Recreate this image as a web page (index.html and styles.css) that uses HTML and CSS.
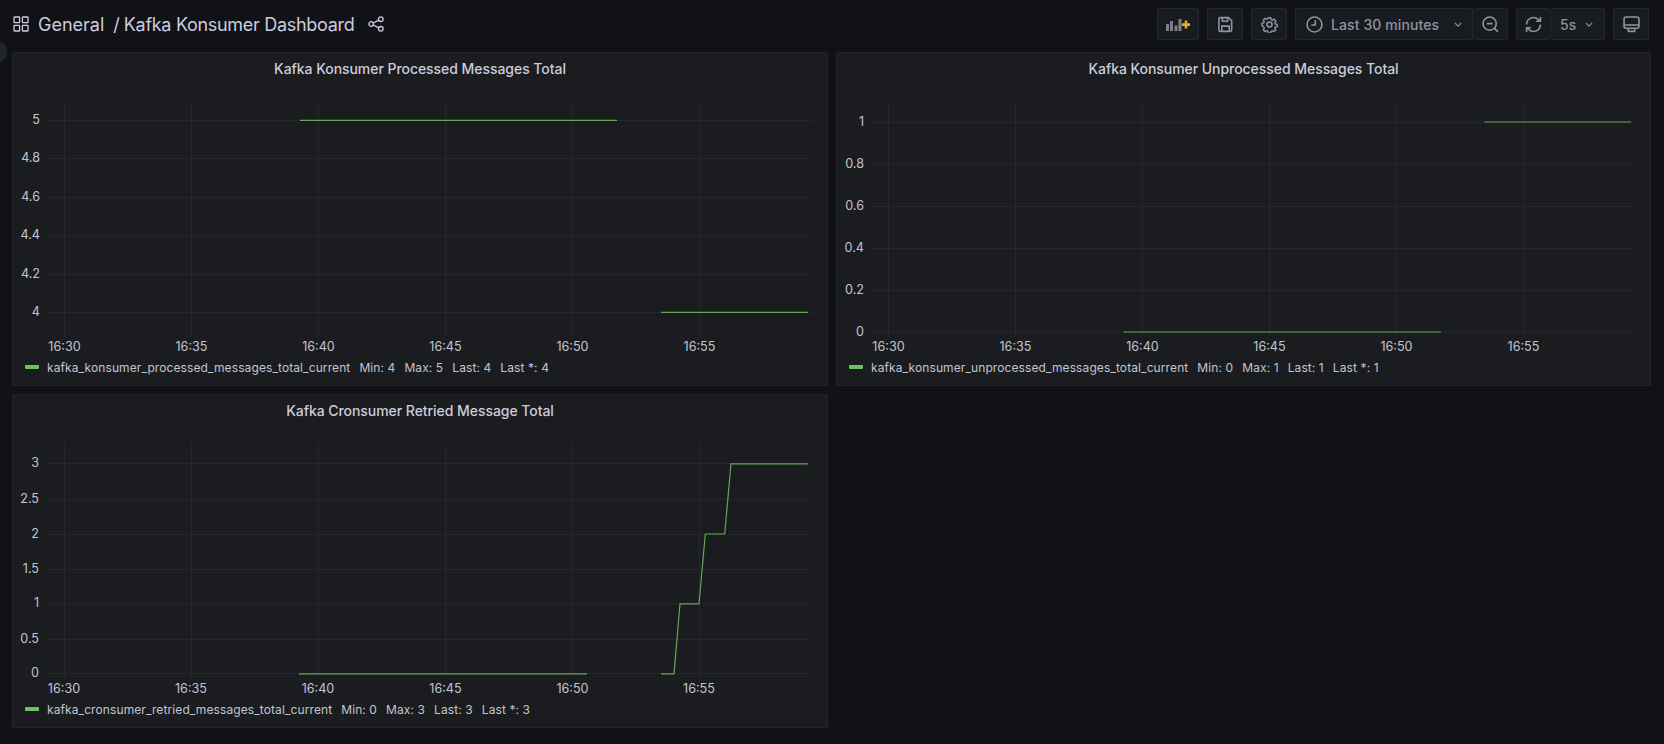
FILE: index.html
```html
<!DOCTYPE html>
<html lang="en">
<head>
<meta charset="utf-8">
<title>Kafka Konsumer Dashboard</title>
<link rel="stylesheet" href="styles.css">
</head>
<body>
<div class="toggle"></div>
<header class="topbar">
  <div class="crumbs">
    <svg class="ico-apps" viewBox="0 0 16 16"><rect x="1" y="1" width="5.6" height="5.6" rx=".6"/><rect x="9.4" y="1" width="5.6" height="5.6" rx=".6"/><rect x="1" y="9.4" width="5.6" height="5.6" rx=".6"/><rect x="9.4" y="9.4" width="5.6" height="5.6" rx=".6"/></svg>
    <span class="crumb-folder">General</span>
    <span class="crumb-sep">/</span>
    <span class="crumb-name">Kafka Konsumer Dashboard</span>
    <svg class="ico-share" viewBox="0 0 16 16"><circle cx="3.2" cy="8" r="2.3"/><circle cx="12.8" cy="3.2" r="2.3"/><circle cx="12.8" cy="12.8" r="2.3"/><path d="M5.3 7 10.7 4.2M5.3 9l5.4 2.8"/></svg>
  </div>
  <div class="tools">
    <button class="btn btn-add">
      <svg class="ico-add" viewBox="0 0 26 16"><path class="bars" d="M1 8h3v7H1zM5 5h3v10H5zM9.500 9.500h3V15h-3zM13.500 3h3v12h-3z"/><path class="plus" d="M17 7.300h2.700V4.600h2.600v2.700H25v2.600h-2.700v2.700h-2.600V9.900H17z"/></svg>
    </button>
    <button class="btn btn-square">
      <svg class="ico" viewBox="0 0 16 16"><path d="M2.800 1.500h8l3 3v8.500a1.500 1.500 0 0 1-1.500 1.500H3.300a1.500 1.500 0 0 1-1.500-1.500V2.500a1 1 0 0 1 1-1z"/><path d="M5 1.700v3.300h5V1.700M4.500 14.300V9.500h7v4.800"/></svg>
    </button>
    <button class="btn btn-square">
      <svg class="ico" viewBox="0 0 16 16"><circle cx="8" cy="8" r="2.400"/><path d="M6.700 1h2.600l.4 1.900 1.300.6 1.700-1 1.800 1.900-1 1.600.6 1.400 1.900.4v2.400l-1.900.4-.6 1.400 1 1.600-1.800 1.900-1.700-1-1.300.6-.4 1.900H6.700l-.4-1.900-1.300-.6-1.700 1-1.800-1.900 1-1.600-.6-1.400L0 9.200V6.800l1.900-.4.6-1.400-1-1.600 1.800-1.900 1.700 1 1.300-.6z" transform="translate(.8 .8) scale(.9)"/></svg>
    </button>
    <div class="group">
      <button class="btn btn-range">
        <svg class="ico" viewBox="0 0 16 16"><circle cx="8" cy="8" r="7"/><path d="M8.800 4v4.400H5"/></svg>
        <span class="range-label">Last 30 minutes</span>
        <svg class="chev" viewBox="0 0 10 6"><path d="M1 1l4 4 4-4"/></svg>
      </button>
      <button class="btn btn-zoom">
        <svg class="ico" viewBox="0 0 16 16"><circle cx="7.200" cy="7.200" r="6.200"/><path d="M11.700 11.700 15 15M4.500 7.200h5.400"/></svg>
      </button>
    </div>
    <div class="group">
      <button class="btn btn-sync">
        <svg class="ico" viewBox="0 0 16 16"><path d="M1.500 8a6.500 6.500 0 0 1 11-4.700L14.500 5M14.500 1v4h-4M14.500 8a6.500 6.500 0 0 1-11 4.700L1.500 11M1.500 15v-4h4"/></svg>
      </button>
      <button class="btn btn-interval">
        <span class="range-label">5s</span>
        <svg class="chev" viewBox="0 0 10 6"><path d="M1 1l4 4 4-4"/></svg>
      </button>
    </div>
    <button class="btn btn-square">
      <svg class="ico" viewBox="0 0 16 16"><rect x="1" y="1" width="14" height="10.500" rx="1.800"/><path d="M1 8.500h14M5 11.500v3h6v-3"/></svg>
    </button>
  </div>
</header>

<main class="board">
  <section class="panel">
    <h2 class="panel-title">Kafka Konsumer Processed Messages Total</h2>
    <svg class="chart" viewBox="13 85 814 272" width="814" height="272">
      <g class="grid">
        <path d="M64.500 102V336M191.500 102V336M318.500 102V336M445.500 102V336M572.500 102V336M699.500 102V336"/>
        <path d="M46 120.500H812M46 158.500H812M46 197.500H812M46 235.500H812M46 274.500H812M46 312.500H812"/>
      </g>
      <g class="y-labels">
        <text x="40" y="124.500">5</text><text x="40" y="162.500">4.8</text><text x="40" y="201.500">4.6</text><text x="40" y="239.500">4.4</text><text x="40" y="278.500">4.2</text><text x="40" y="316.500">4</text>
      </g>
      <g class="x-labels">
        <text x="64.500" y="350.500">16:30</text><text x="191.500" y="350.500">16:35</text><text x="318.500" y="350.500">16:40</text><text x="445.500" y="350.500">16:45</text><text x="572.500" y="350.500">16:50</text><text x="699.500" y="350.500">16:55</text>
      </g>
      <path class="series" d="M300 120.300H617"/>
      <path class="series" d="M661 312.300H808"/>
    </svg>
    <div class="legend">
      <i class="swatch"></i>
      <span class="legend-name">kafka_konsumer_processed_messages_total_current</span>
      <span class="stat">Min: 4</span><span class="stat">Max: 5</span><span class="stat">Last: 4</span><span class="stat">Last *: 4</span>
    </div>
  </section>

  <section class="panel">
    <h2 class="panel-title">Kafka Konsumer Unprocessed Messages Total</h2>
    <svg class="chart" viewBox="837 85 813 272" width="813" height="272">
      <g class="grid">
        <path d="M888.500 102V336M1015.500 102V336M1142.500 102V336M1269.500 102V336M1396.500 102V336M1523.500 102V336"/>
        <path d="M869 122.500H1635M869 164.500H1635M869 206.500H1635M869 248.500H1635M869 290.500H1635M869 332.500H1635"/>
      </g>
      <g class="y-labels">
        <text x="864" y="126.500">1</text><text x="864" y="168.500">0.8</text><text x="864" y="210.500">0.6</text><text x="864" y="252.500">0.4</text><text x="864" y="294.500">0.2</text><text x="864" y="336.500">0</text>
      </g>
      <g class="x-labels">
        <text x="888.500" y="350.500">16:30</text><text x="1015.500" y="350.500">16:35</text><text x="1142.500" y="350.500">16:40</text><text x="1269.500" y="350.500">16:45</text><text x="1396.500" y="350.500">16:50</text><text x="1523.500" y="350.500">16:55</text>
      </g>
      <path class="series" d="M1123.500 332H1441"/>
      <path class="series" d="M1484.500 122H1631"/>
    </svg>
    <div class="legend">
      <i class="swatch"></i>
      <span class="legend-name">kafka_konsumer_unprocessed_messages_total_current</span>
      <span class="stat">Min: 0</span><span class="stat">Max: 1</span><span class="stat">Last: 1</span><span class="stat">Last *: 1</span>
    </div>
  </section>

  <section class="panel">
    <h2 class="panel-title">Kafka Cronsumer Retried Message Total</h2>
    <svg class="chart" viewBox="13 427 814 272" width="814" height="272">
      <g class="grid">
        <path d="M64.500 443V677M191.500 443V677M318.500 443V677M445.500 443V677M572.500 443V677M699.500 443V677"/>
        <path d="M45 463.500H811M45 499.500H811M45 534.500H811M45 569.500H811M45 603.500H811M45 639.500H811M45 673.500H811"/>
      </g>
      <g class="y-labels">
        <text x="39" y="468">3</text><text x="39" y="503.500">2.5</text><text x="39" y="538.500">2</text><text x="39" y="573.500">1.5</text><text x="39" y="608">1</text><text x="39" y="643.500">0.5</text><text x="39" y="678">0</text>
      </g>
      <g class="x-labels">
        <text x="64" y="692.500">16:30</text><text x="191" y="692.500">16:35</text><text x="318" y="692.500">16:40</text><text x="445.500" y="692.500">16:45</text><text x="572.500" y="692.500">16:50</text><text x="699" y="692.500">16:55</text>
      </g>
      <path class="series" d="M299 673.800H587"/>
      <path class="series" d="M661 673.800H674L680 603.800H699L705.300 534H724.700L731 463.800H807.700"/>
    </svg>
    <div class="legend">
      <i class="swatch"></i>
      <span class="legend-name">kafka_cronsumer_retried_messages_total_current</span>
      <span class="stat">Min: 0</span><span class="stat">Max: 3</span><span class="stat">Last: 3</span><span class="stat">Last *: 3</span>
    </div>
  </section>
</main>
</body>
</html>
```
FILE: styles.css
```css
* { box-sizing: border-box; }

html, body {
  margin: 0;
  height: 100%;
  overflow: hidden;
  background: #111217;
  color: #ccccdc;
  font-family: Inter, "Noto Sans", sans-serif;
}

.toggle {
  position: absolute;
  left: -16px;
  top: 40px;
  width: 23px;
  height: 23px;
  border-radius: 50%;
  background: #22252b;
}

.topbar {
  display: flex;
  align-items: center;
  justify-content: space-between;
  height: 52px;
  padding: 0 15px 4px 13px;
}

.crumbs {
  display: flex;
  align-items: center;
  font-size: 18px;
  color: #ccccdc;
}

.ico-apps, .ico-share {
  fill: none;
  stroke: #ccccdc;
  stroke-width: 1.300;
  width: 16px;
  height: 16px;
}

.crumb-folder { margin-left: 9px; }
.crumb-sep { margin-left: 9px; }
.crumb-name { margin-left: 4px; letter-spacing: -.3px; }
.ico-share { margin-left: 14px; }

.tools {
  display: flex;
  gap: 8px;
}

.group { display: flex; }

.btn {
  display: flex;
  align-items: center;
  justify-content: center;
  height: 32px;
  padding: 0;
  background: #181b1f;
  border: 1px solid #24272c;
  border-radius: 2px;
  color: #92929f;
  font: 500 14px Inter, sans-serif;
}

.btn-add { width: 42px; }
.btn-square { width: 36px; }

.group .btn + .btn { border-left: 0; }

.btn-range {
  width: 178px;
  justify-content: flex-start;
  padding-left: 10px;
}

.btn-zoom { width: 35px; }
.btn-sync { width: 35px; }

.btn-interval {
  width: 54px;
  justify-content: flex-start;
  padding-left: 9px;
}

.ico {
  width: 17px;
  height: 17px;
  fill: none;
  stroke: currentColor;
  stroke-width: 1.500;
}

.ico-add { width: 26px; height: 16px; }
.bars { fill: #7f7f8a; }
.plus { fill: #f5a623; }

.range-label { margin-left: 8px; letter-spacing: .1px; }
.btn-interval .range-label { margin-left: 0; }

.chev {
  width: 8px;
  height: 5px;
  margin-left: 15px;
  fill: none;
  stroke: currentColor;
  stroke-width: 1.400;
}

.btn-interval .chev { margin-left: 9px; }

.board {
  display: grid;
  grid-template-columns: 816px 815px;
  grid-auto-rows: 334px;
  gap: 8px;
  padding-left: 12px;
}

.panel {
  background: #1a1c20;
  border: 1px solid #24262b;
  border-radius: 2px;
  display: flex;
  flex-direction: column;
}

.panel-title {
  height: 32px;
  margin: 0;
  font-size: 14px;
  font-weight: 500;
  letter-spacing: -.05px;
  line-height: 31px;
  text-align: center;
  color: #ccccdc;
}

.chart { display: block; }

.grid path {
  fill: none;
  stroke: #24272b;
  stroke-width: 1;
}

.y-labels text, .x-labels text {
  font: 12.600px Inter, sans-serif;
  fill: #c4c4d0;
}

.y-labels { transform: translateY(-1px); }
.y-labels text { text-anchor: end; }
.x-labels text { text-anchor: middle; }

.series {
  fill: none;
  stroke: #62a855;
  stroke-width: 1.200;
}

.legend {
  display: flex;
  align-items: center;
  height: 28px;
  padding: 0 0 8px 12px;
  font-size: 12px;
  letter-spacing: .1px;
  color: #c4c4d0;
}

.swatch {
  width: 14px;
  height: 4px;
  border-radius: 1px;
  background: #73bf69;
}

.legend-name { margin-left: 8px; }
.stat { margin-left: 9px; }
```
